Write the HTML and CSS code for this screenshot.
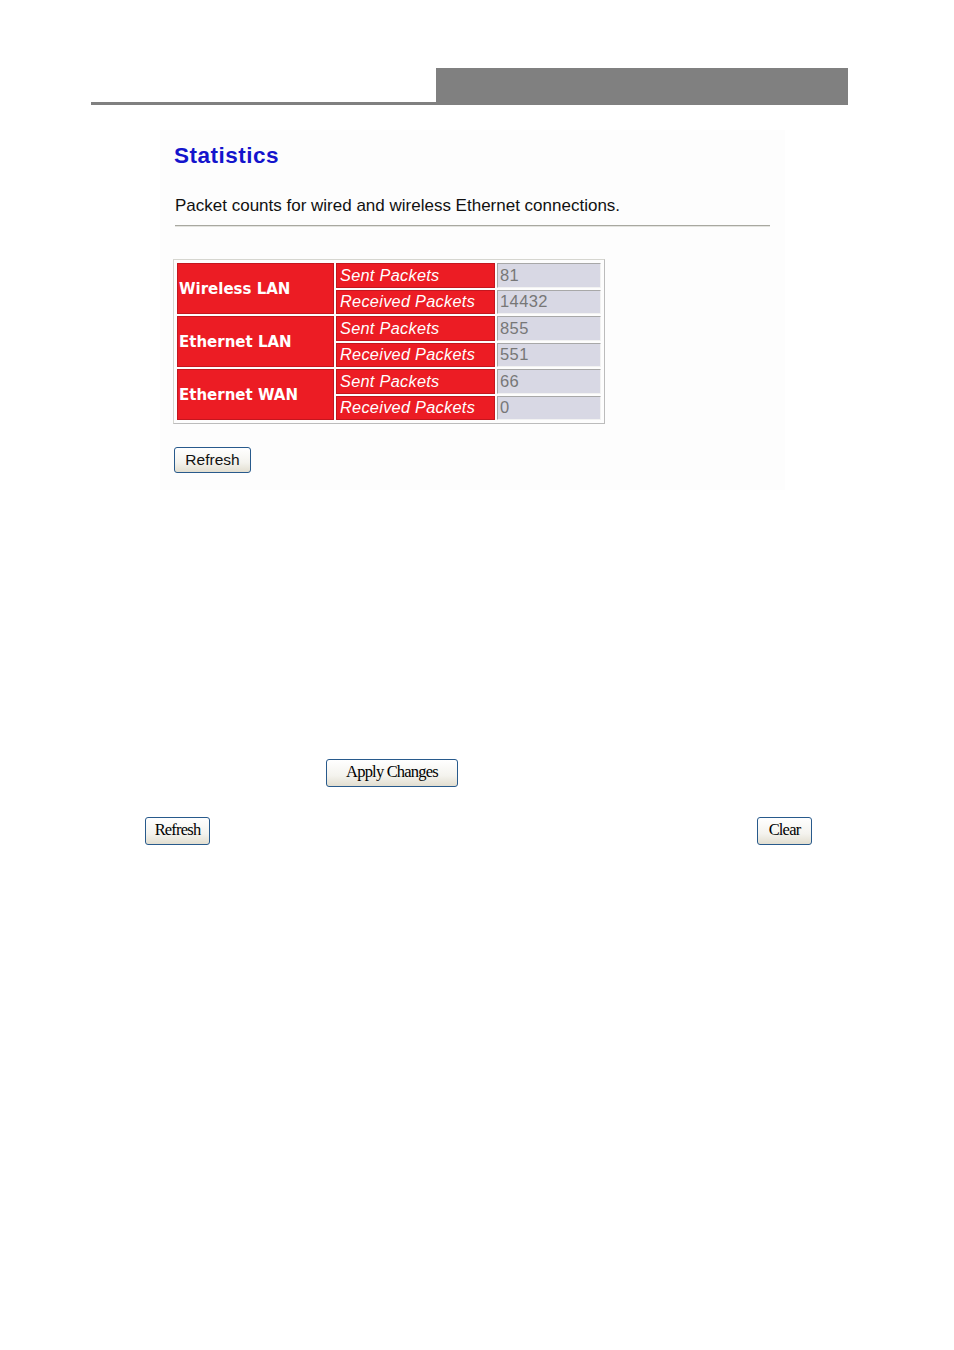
FILE: index.html
```html
<!DOCTYPE html>
<html>
<head>
<meta charset="utf-8">
<link rel="stylesheet" href="styles.css">
</head>
<body>
<div class="header">
  <div class="header-line"></div>
  <div class="header-block"></div>
</div>

<div class="panel">
  <h1 class="title">Statistics</h1>
  <p class="desc">Packet counts for wired and wireless Ethernet connections.</p>
  <div class="rule"></div>
  <table class="stats">
    <tr>
      <td class="iface" rowspan="2">Wireless LAN</td>
      <td class="label">Sent Packets</td>
      <td class="value">81</td>
    </tr>
    <tr>
      <td class="label">Received Packets</td>
      <td class="value">14432</td>
    </tr>
    <tr>
      <td class="iface" rowspan="2">Ethernet LAN</td>
      <td class="label">Sent Packets</td>
      <td class="value">855</td>
    </tr>
    <tr>
      <td class="label">Received Packets</td>
      <td class="value">551</td>
    </tr>
    <tr>
      <td class="iface" rowspan="2">Ethernet WAN</td>
      <td class="label">Sent Packets</td>
      <td class="value">66</td>
    </tr>
    <tr>
      <td class="label">Received Packets</td>
      <td class="value">0</td>
    </tr>
  </table>
  <button class="btn btn-sans">Refresh</button>
</div>

<div class="apply-row">
  <button class="btn btn-serif btn-apply">Apply Changes</button>
</div>
<div class="action-row">
  <button class="btn btn-serif btn-refresh">Refresh</button>
  <button class="btn btn-serif btn-clear">Clear</button>
</div>
</body>
</html>
```
FILE: styles.css
```css
html, body {
  margin: 0;
  padding: 0;
  background: #ffffff;
  font-family: "Liberation Sans", Arial, sans-serif;
}

.header {
  display: flex;
  margin: 68px 0 0 91px;
  width: 757px;
  height: 37px;
}
.header-line {
  flex: 0 0 345px;
  box-sizing: border-box;
  border-bottom: 3px solid #808080;
}
.header-block {
  flex: 1;
  background: #808080;
}

.panel {
  box-sizing: border-box;
  margin: 25px 0 0 160px;
  width: 625px;
  height: 360px;
  padding: 14px 0 0 14px;
  background: #fdfdfd;
}
.title {
  margin: 0;
  font-size: 22.5px;
  line-height: 23px;
  letter-spacing: 0.5px;
  font-weight: bold;
  color: #1414cc;
}
.desc {
  margin: 29px 0 0 1px;
  font-size: 17px;
  line-height: 20px;
  color: #111;
}
.rule {
  margin: 9px 0 0 1px;
  width: 595px;
  height: 1px;
  background: #a8a8a0;
  border-bottom: 1px solid #e4e4e0;
}

.stats {
  margin: 32px 0 0 -1px;
  border-collapse: separate;
  border-spacing: 2px 2.5px;
  padding: 1px;
  border: 1px solid #d6d6d0;
  border-right-color: #bcbcbc;
  border-bottom-color: #bcbcbc;
}
.stats td {
  box-sizing: border-box;
  height: 24.5px;
  padding: 0;
  white-space: nowrap;
}
.iface {
  width: 157px;
  background: #ec1c24;
  border: 1px solid #c4161e;
  color: #fff;
  font-family: "DejaVu Sans", Verdana, sans-serif;
  font-weight: bold;
  font-size: 15px;
  padding-left: 1px !important;
  vertical-align: middle;
}
.label {
  width: 159px;
  background: #ec1c24;
  border: 1px solid #c4161e;
  color: #fff;
  font-style: italic;
  font-size: 16.3px;
  letter-spacing: 0.3px;
  padding-left: 3px !important;
}
.value {
  width: 104px;
  background: #d8d8e4;
  border: 1px solid #f2f2f2;
  border-top-color: #a8a8a8;
  border-left-color: #a8a8a8;
  color: #777;
  font-size: 16.5px;
  letter-spacing: 0.4px;
  padding-left: 2px !important;
}

.btn {
  box-sizing: border-box;
  border: 1px solid #285a8c;
  border-radius: 3px;
  background: linear-gradient(#ffffff, #f4f3ee 60%, #e2ded0);
  color: #000;
  padding: 0;
  cursor: default;
}
.btn-sans {
  display: block;
  margin-top: 23px;
  width: 77px;
  height: 26px;
  font-family: "Liberation Sans", Arial, sans-serif;
  font-size: 15.5px;
  color: #111;
}
.btn-serif {
  font-family: "Liberation Serif", "Times New Roman", serif;
  font-size: 16.5px;
  letter-spacing: -0.8px;
  height: 28px;
  padding-bottom: 3px;
}

.apply-row {
  margin: 269px 0 0 326px;
}
.btn-apply {
  width: 132px;
}
.action-row {
  display: flex;
  justify-content: space-between;
  margin: 30px 0 0 145px;
  width: 667px;
}
.btn-refresh {
  width: 65px;
}
.btn-clear {
  width: 55px;
}
```
